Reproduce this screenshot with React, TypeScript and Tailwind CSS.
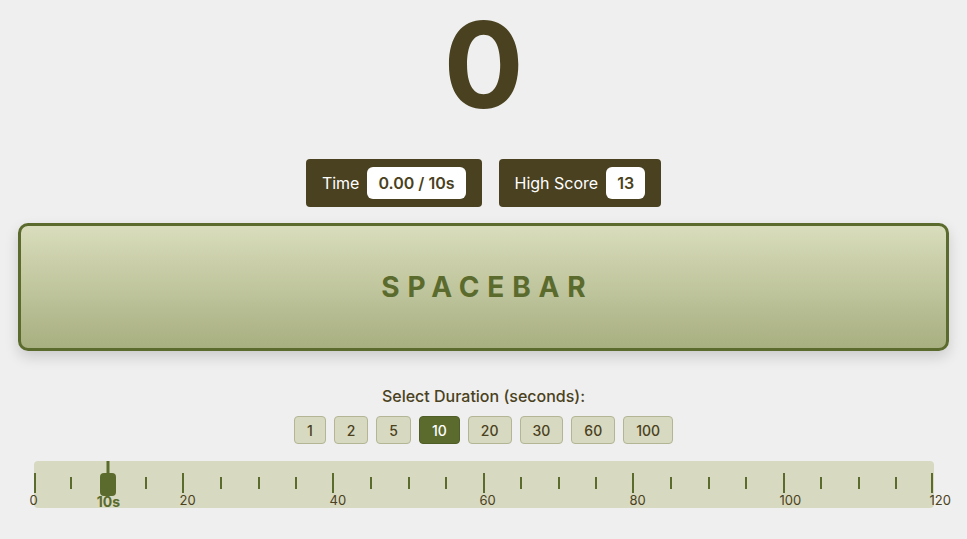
import React from 'react'

const durations = [1, 2, 5, 10, 20, 30, 60, 100]
const selected = 10
const max = 120
const ticks = Array.from({ length: max / 5 + 1 }, (_, i) => i * 5)

function Stat({ label, value }: { label: string; value: string }) {
  return (
    <div className="flex items-center gap-2 rounded-[4px] bg-[#4a4120] px-4 py-2">
      <span className="text-[16px] text-white">{label}</span>
      <span className="flex h-8 items-center rounded-[6px] bg-white px-[11px] text-[16px] font-semibold text-[#4a4120]">
        {value}
      </span>
    </div>
  )
}

export default function App() {
  const pct = (v: number) => `${(v / max) * 100}%`

  return (
    <div className="min-h-[539px] bg-[#efefef] px-[18px] font-['Inter',sans-serif] text-[#4a4120]">
      <div className="text-center text-[119px] font-bold leading-[130px]">0</div>

      <div className="mt-[29px] flex justify-center gap-[17px]">
        <Stat label="Time" value="0.00 / 10s" />
        <Stat label="High Score" value="13" />
      </div>

      <div className="mt-4 flex h-[128px] items-center justify-center rounded-[10px] border-[3px] border-[#5b6b2d] bg-gradient-to-b from-[#d9ddbc] to-[#a8af80] shadow-[0_6px_14px_rgba(0,0,0,0.15)]">
        <span className="pl-[0.28em] text-[28px] font-bold tracking-[0.28em] text-[#5b6b2d]">SPACEBAR</span>
      </div>

      <div className="mt-[33px] text-center text-[16px] font-medium leading-6">Select Duration (seconds):</div>

      <div className="mt-2 flex justify-center gap-2">
        {durations.map((d) => (
          <button
            key={d}
            className={
              d === selected
                ? 'h-[28px] rounded-[4px] border border-[#4f5e26] bg-[#5b6b2d] px-3 text-[14px] font-medium text-white'
                : 'h-[28px] rounded-[4px] border border-[#b3b595] bg-[#d8d9c1] px-3 text-[14px] font-medium text-[#4a4120]'
            }
          >
            {d}
          </button>
        ))}
      </div>

      <div className="relative mx-auto mt-[17px] h-[47px] w-[900px] rounded-[4px] bg-[#d8d9c1]">
        {ticks.map((t) => {
          const major = t % 20 === 0
          return (
            <React.Fragment key={t}>
              <div
                className={
                  major
                    ? 'absolute top-[12px] h-[20px] w-[2px] -translate-x-1/2 bg-[#5b6b2d]'
                    : 'absolute top-[16px] h-[12px] w-[2px] -translate-x-1/2 bg-[#5b6b2d]'
                }
                style={{ left: t === max ? 'calc(100% - 2px)' : t === 0 ? '1px' : pct(t) }}
              />
              {major && (
                <span
                  className="absolute top-[31px] -ml-[4px] text-[13px] leading-4 text-[#4a4120]"
                  style={{ left: pct(t) }}
                >
                  {t}
                </span>
              )}
            </React.Fragment>
          )
        })}
        <div className="absolute top-0 h-[12px] w-[3px] -translate-x-1/2 bg-[#5b6b2d]" style={{ left: pct(selected) }} />
        <div
          className="absolute top-[12px] h-[23px] w-[16px] -translate-x-1/2 rounded-[4px] bg-[#5b6b2d]"
          style={{ left: pct(selected) }}
        />
        <span
          className="absolute top-[33px] -translate-x-1/2 text-[14px] font-bold leading-4 text-[#5b6b2d]"
          style={{ left: pct(selected) }}
        >
          10s
        </span>
      </div>
    </div>
  )
}
